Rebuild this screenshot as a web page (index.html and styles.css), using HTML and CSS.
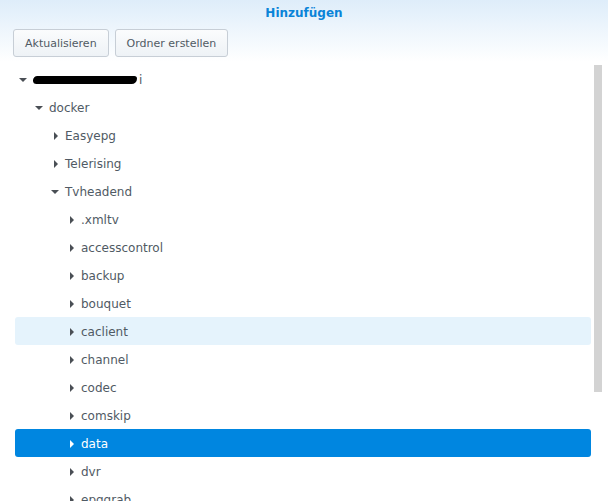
FILE: index.html
```html
<!DOCTYPE html>
<html>
<head>
    <meta charset="UTF-8">
    <title>Hinzufügen</title>
    <link rel="stylesheet" href="styles.css">
</head>
<body>
    <div class="dialog">
        <div class="titel">Hinzufügen</div>

        <div class="toolbar">
            <button class="knopf">Aktualisieren</button>
            <button class="knopf">Ordner erstellen</button>
        </div>

        <div class="baum">
            <div class="zeile ebene0"><span class="pfeil offen"></span><span class="geschwaerzt"></span><span class="rest">i</span></div>
            <div class="zeile ebene1"><span class="pfeil offen"></span>docker</div>
            <div class="zeile ebene2"><span class="pfeil"></span>Easyepg</div>
            <div class="zeile ebene2"><span class="pfeil"></span>Telerising</div>
            <div class="zeile ebene2"><span class="pfeil offen"></span>Tvheadend</div>
            <div class="zeile ebene3"><span class="pfeil"></span>.xmltv</div>
            <div class="zeile ebene3"><span class="pfeil"></span>accesscontrol</div>
            <div class="zeile ebene3"><span class="pfeil"></span>backup</div>
            <div class="zeile ebene3"><span class="pfeil"></span>bouquet</div>
            <div class="zeile ebene3 hover"><span class="pfeil"></span>caclient</div>
            <div class="zeile ebene3"><span class="pfeil"></span>channel</div>
            <div class="zeile ebene3"><span class="pfeil"></span>codec</div>
            <div class="zeile ebene3"><span class="pfeil"></span>comskip</div>
            <div class="zeile ebene3 aktiv"><span class="pfeil"></span>data</div>
            <div class="zeile ebene3"><span class="pfeil"></span>dvr</div>
            <div class="zeile ebene3"><span class="pfeil"></span>epggrab</div>
        </div>

        <div class="scrollbalken"></div>
    </div>
</body>
</html>
```

FILE: styles.css
```css
body {
    margin: 0;
    background-color: #fff;
    font-family: "DejaVu Sans", Verdana, sans-serif;
    font-size: 12px;
    color: #505a64;
    overflow: hidden;
}
.dialog {
    position: relative;
    height: 501px;
    background: linear-gradient(#deedfa, #fff 62px);
}
.titel {
    height: 26px;
    line-height: 27px;
    text-align: center;
    font-weight: bold;
    color: #0a84d8;
}
.toolbar {
    display: flex;
    gap: 6px;
    padding: 3px 15px 0 13px;
}
.knopf {
    height: 28px;
    padding: 0 11px;
    font-family: inherit;
    font-size: 11px;
    color: #505a64;
    background: linear-gradient(#fbfcfd, #eef2f6);
    border: 1px solid #c7ced6;
    border-radius: 3px;
}
.baum {
    padding: 8px 17px 0 15px;
}
.zeile {
    display: flex;
    align-items: center;
    box-sizing: border-box;
    height: 28px;
    padding-top: 2px;
    border-radius: 3px;
    white-space: nowrap;
}
.ebene0 { padding-left: 0; }
.ebene1 { padding-left: 16px; }
.ebene2 { padding-left: 32px; }
.ebene3 { padding-left: 48px; }
.hover {
    background-color: #e5f3fc;
}
.aktiv {
    background-color: #0086e0;
    color: #fff;
}
.pfeil {
    width: 16px;
    height: 16px;
    margin-right: 2px;
    display: flex;
    align-items: center;
    justify-content: center;
}
.pfeil::before {
    content: "";
    border-top: 4px solid transparent;
    border-bottom: 4px solid transparent;
    border-left: 4px solid #4a4f55;
    margin-left: 2px;
}
.pfeil.offen::before {
    border-left: 4px solid transparent;
    border-right: 4px solid transparent;
    border-top: 4px solid #4a4f55;
    border-bottom: 0;
    margin-left: 0;
}
.aktiv .pfeil::before {
    border-left-color: #fff;
}
.geschwaerzt {
    display: inline-block;
    width: 104px;
    height: 8px;
    background-color: #000;
    border-radius: 5px 3px 6px 4px;
}
.rest {
    margin-left: 2px;
}
.scrollbalken {
    position: absolute;
    left: 594px;
    top: 65px;
    width: 8px;
    height: 327px;
    background-color: #d3d3d3;
}
```
